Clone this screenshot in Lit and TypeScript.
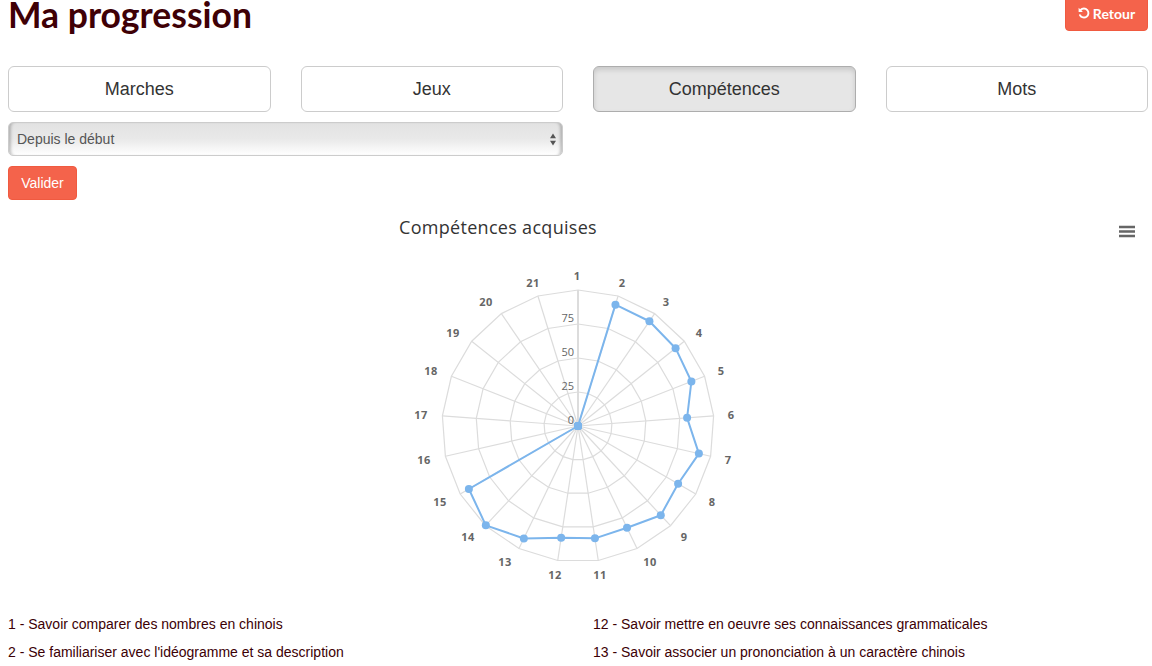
import { LitElement, html, css, svg } from "lit";
import { customElement } from "lit/decorators.js";

const CX = 578;
const CY = 426;
const N = 21;
const OY = 210; // svg top in page coords
const radii = [0, 127, 126.8, 124.8, 121.8, 109.4, 124, 115.6, 121.7, 113, 113.6, 113, 124.8, 135.5, 126, 0, 0, 0, 0, 0, 0];
const labels: [number, number][] = [
  [577, 276], [622, 283], [666, 302], [699, 333], [721, 371], [731, 415], [728, 460],
  [712, 502], [684, 537], [650, 562], [600, 575], [555, 575], [505, 562], [468, 537],
  [440, 502], [424, 460], [421, 415], [431, 371], [453, 333], [486, 302], [533, 283],
];
const pt = (i: number, r: number) => {
  const a = (i * 2 * Math.PI) / N;
  return [CX + r * Math.sin(a), CY - OY - r * Math.cos(a)];
};
const ring = (r: number) =>
  Array.from({ length: N }, (_, i) => pt(i, r).map((v) => v.toFixed(1)).join(",")).join(" ");

const legend = [
  ["1 - Savoir comparer des nombres en chinois", "12 - Savoir mettre en oeuvre ses connaissances grammaticales"],
  ["2 - Se familiariser avec l'idéogramme et sa description", "13 - Savoir associer un prononciation à un caractère chinois"],
];
const tabs = ["Marches", "Jeux", "Compétences", "Mots"];

@customElement("app-root")
export class AppRoot extends LitElement {
  static styles = css`
    :host {
      display: block;
      height: 666px;
      overflow: hidden;
      padding: 0 4px 0 8px;
      box-sizing: border-box;
      font-family: "Liberation Sans", Arial, sans-serif;
      font-size: 14px;
      color: #3c0005;
      background: #fff;
    }
    .head {
      display: flex;
      justify-content: space-between;
      align-items: flex-start;
      height: 66px;
    }
    h1 {
      margin: 0;
      font-family: "Lato", sans-serif;
      font-weight: 700;
      font-size: 35.5px;
      line-height: 30px;
      color: #3f0006;
    }
    .retour {
      display: flex;
      align-items: center;
      justify-content: center;
      gap: 3px;
      box-sizing: border-box;
      width: 83px;
      height: 36px;
      margin-top: -5px;
      padding: 0;
      border: 1px solid #f05a40;
      border-radius: 4px;
      background: #f4634b;
      color: #fff;
      font-family: "Lato", sans-serif;
      font-weight: 700;
      font-size: 14px;
    }
    .tabs {
      display: grid;
      grid-template-columns: repeat(4, 1fr);
      column-gap: 30px;
    }
    .tab {
      height: 46px;
      box-sizing: border-box;
      border: 1px solid #ccc;
      border-radius: 6px;
      background: #fff;
      color: #333;
      font: 18px "Liberation Sans", Arial, sans-serif;
      padding: 0;
    }
    .tab.on {
      background: #e6e6e6;
      border-color: #adadad;
      box-shadow: inset 0 3px 5px rgba(0, 0, 0, 0.125);
    }
    .pick {
      display: block;
      position: relative;
      width: 555px;
      margin-top: 10px;
    }
    select {
      display: block;
      appearance: none;
      width: 100%;
      height: 34px;
      box-sizing: border-box;
      padding: 0 8px;
      border: 1px solid #ccc;
      border-radius: 5px;
      background: linear-gradient(#e2e2e2 0, #e9e9e9 50%, #ffffff 100%);
      box-shadow: inset 4px 0 3px -2px rgba(0, 0, 0, 0.22), inset -4px 0 3px -2px rgba(0, 0, 0, 0.22);
      color: #555;
      font: 14px "Liberation Sans", Arial, sans-serif;
    }
    .arrows {
      position: absolute;
      right: 6px;
      top: 11px;
      pointer-events: none;
    }
    .valider {
      display: block;
      margin-top: 10px;
      width: 69px;
      height: 34px;
      box-sizing: border-box;
      padding: 0;
      border: 1px solid #f05a40;
      border-radius: 4px;
      background: #f4634b;
      color: #fff;
      font: 14px "Liberation Sans", Arial, sans-serif;
    }
    .chart {
      display: block;
      width: 1152px;
      height: 397px;
      margin-left: -8px;
      margin-top: 10px;
    }
    .title {
      font-family: "Open Sans", sans-serif;
      font-size: 18px;
      letter-spacing: 0.3px;
      fill: #333;
    }
    .axis {
      font-family: "Open Sans", sans-serif;
      font-size: 11px;
      fill: #666;
    }
    .cat {
      font-family: "Open Sans", sans-serif;
      font-size: 11px;
      font-weight: 700;
      letter-spacing: 0.4px;
      fill: #666;
    }
    .legend {
      display: grid;
      grid-template-columns: 585px 1fr;
      row-gap: 12px;
      margin-top: 9px;
      line-height: 16px;
    }
  `;

  render() {
    const pts = radii.map((r, i) => pt(i, r));
    return html`
      <div class="head">
        <h1>Ma progression</h1>
        <button class="retour">
          <svg width="12" height="12" viewBox="0 0 12 12" aria-hidden="true">
            <path d="M2.6 3A4.5 4.5 0 1 1 2 8.2" fill="none" stroke="#fff" stroke-width="1.9" stroke-linecap="round" />
            <path d="M0.6 0.7V5H4.9Z" fill="#fff" />
          </svg>
          Retour
        </button>
      </div>
      <div class="tabs">
        ${tabs.map((t) => html`<button class="tab ${t === "Compétences" ? "on" : ""}">${t}</button>`)}
      </div>
      <div class="pick">
        <select><option>Depuis le début</option></select>
        <svg class="arrows" width="8" height="13" viewBox="0 0 8 13" aria-hidden="true">
          <path d="M4 0.5L7 5.200H1Z M4 12.500L1 7.800H7Z" fill="#555" />
        </svg>
      </div>
      <button class="valider">Valider</button>
      <svg class="chart" viewBox="0 0 1152 397" role="img">
        <text class="title" x="498" y="24" text-anchor="middle">Compétences acquises</text>
        <path d="M1119 ${227 - OY}H1135M1119 ${231.5 - OY}H1135M1119 ${236 - OY}H1135" stroke="#666" stroke-width="2.600" fill="none" />
        ${[34, 68, 102, 136].map(
          (r) => svg`<polygon points=${ring(r)} fill="none" stroke="#dcdcdc" stroke-width="1.2" />`
        )}
        ${Array.from({ length: N }, (_, i) => {
          const p = pt(i, 136);
          return svg`<line x1=${CX} y1=${CY - OY} x2=${p[0]} y2=${p[1]} stroke="#dcdcdc" stroke-width=${i === 0 ? 2 : 1.2} />`;
        })}
        ${[["0", 420], ["25", 386], ["50", 352], ["75", 318]].map(
          ([t, y]) => svg`<text class="axis" x="574" y=${(y as number) - OY + 4} text-anchor="end">${t}</text>`
        )}
        ${labels.map(
          ([x, y], i) => svg`<text class="cat" x=${x} y=${y - OY + 4} text-anchor="middle">${i + 1}</text>`
        )}
        <polyline points=${pts.slice(0, 15).concat([pts[0]]).map((p) => p.join(",")).join(" ")} fill="none" stroke="#7cb5ec" stroke-width="2" stroke-linejoin="round" />
        ${pts.map((p) => svg`<circle cx=${p[0]} cy=${p[1]} r="4" fill="#7cb5ec" />`)}
      </svg>
      <div class="legend">
        ${legend.flat().map((l) => html`<div>${l}</div>`)}
      </div>
    `;
  }
}
